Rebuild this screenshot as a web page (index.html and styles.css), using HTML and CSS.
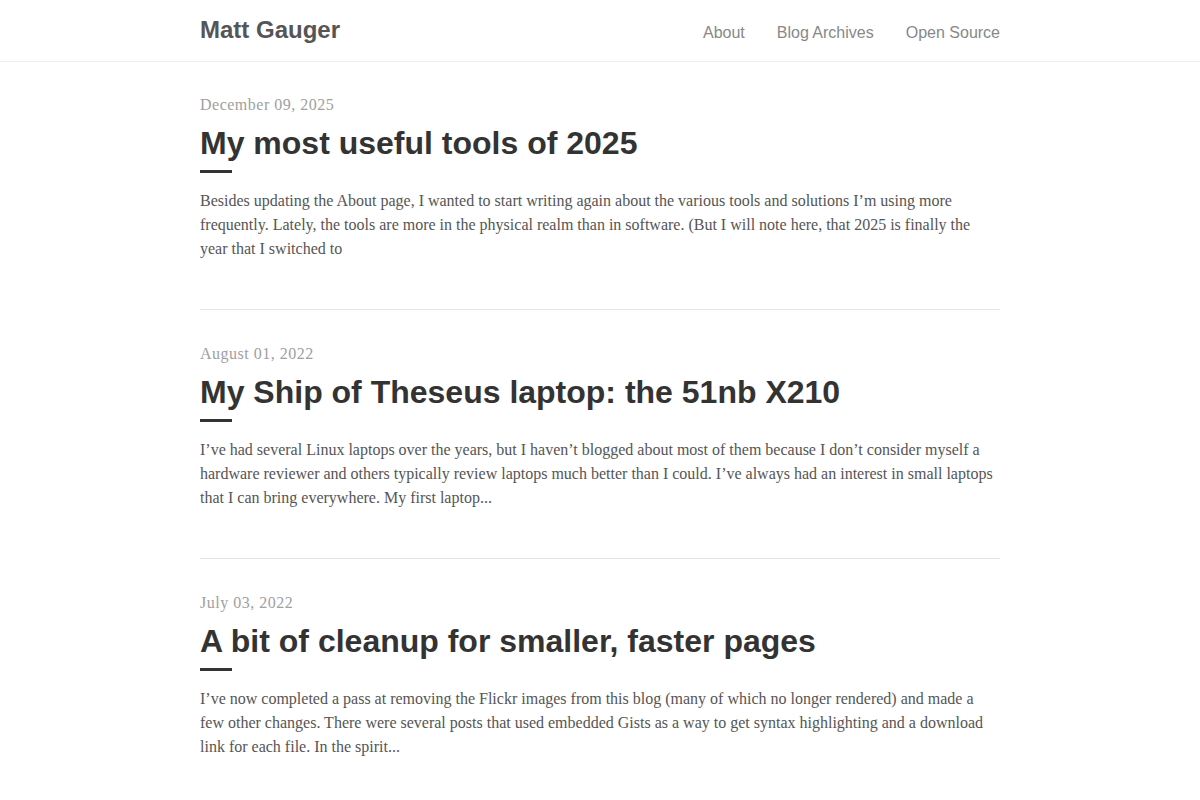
FILE: index.html
```html
<!DOCTYPE html>
<html lang="en">
<head>
    <meta charset="UTF-8">
    <meta name="viewport" content="width=device-width, initial-scale=1.0">
    <title>Matt Gauger</title>
    <link rel="stylesheet" href="styles.css">
</head>
<body>
    <header class="site-header">
        <div class="wrap header-inner">
            <a class="site-title" href="#">Matt Gauger</a>
            <nav class="site-nav">
                <a href="#">About</a>
                <a href="#">Blog Archives</a>
                <a href="#">Open Source</a>
            </nav>
        </div>
    </header>

    <main class="wrap">
        <article class="post">
            <div class="post-date">December 09, 2025</div>
            <h2 class="post-title"><a href="#">My most useful tools of 2025</a></h2>
            <div class="post-rule"></div>
            <p class="post-excerpt">Besides updating the About page, I wanted to start writing again about the various tools and solutions I’m using more frequently. Lately, the tools are more in the physical realm than in software. (But I will note here, that 2025 is finally the year that I switched to</p>
        </article>

        <article class="post">
            <div class="post-date">August 01, 2022</div>
            <h2 class="post-title"><a href="#">My Ship of Theseus laptop: the 51nb X210</a></h2>
            <div class="post-rule"></div>
            <p class="post-excerpt">I’ve had several Linux laptops over the years, but I haven’t blogged about most of them because I don’t consider myself a hardware reviewer and others typically review laptops much better than I could. I’ve always had an interest in small laptops that I can bring everywhere. My first laptop...</p>
        </article>

        <article class="post">
            <div class="post-date">July 03, 2022</div>
            <h2 class="post-title"><a href="#">A bit of cleanup for smaller, faster pages</a></h2>
            <div class="post-rule"></div>
            <p class="post-excerpt">I’ve now completed a pass at removing the Flickr images from this blog (many of which no longer rendered) and made a few other changes. There were several posts that used embedded Gists as a way to get syntax highlighting and a download link for each file. In the spirit...</p>
        </article>
    </main>
</body>
</html>
```

FILE: styles.css
```css
* {
    box-sizing: border-box;
}

body {
    margin: 0;
    background: #fff;
    color: #555;
    font-family: "Liberation Serif", "Times New Roman", serif;
    font-size: 16px;
    line-height: 24px;
}

a {
    color: inherit;
    text-decoration: none;
}

.wrap {
    width: 800px;
    margin: 0 auto;
}

/* header */
.site-header {
    height: 62px;
    border-bottom: 1px solid #eee;
}

.header-inner {
    display: flex;
    justify-content: space-between;
    align-items: center;
    height: 61px;
}

.site-title {
    font-family: "Liberation Sans", Arial, sans-serif;
    font-size: 24px;
    font-weight: bold;
    color: #555;
    margin-top: -2px;
}

.site-nav {
    display: flex;
    gap: 32px;
    font-family: "Liberation Sans", Arial, sans-serif;
    font-size: 16px;
    margin-top: 4px;
}

.site-nav a {
    color: #888;
}

/* posts */
.post {
    padding: 31px 0 48px;
    border-bottom: 1px solid #e5e5e5;
}

.post + .post {
    padding-top: 32px;
}

.post-date {
    color: #a0a0a0;
    font-size: 16px;
    line-height: 24px;
    letter-spacing: 0.5px;
}

.post-title {
    margin: 7px 0 0;
    font-family: "Liberation Sans", Arial, sans-serif;
    font-size: 32px;
    line-height: 38px;
    font-weight: bold;
    color: #333;
}

.post-rule {
    width: 32px;
    height: 3px;
    background: #333;
    margin-top: 8px;
}

.post-excerpt {
    margin: 16px 0 0;
    color: #555;
}
```
